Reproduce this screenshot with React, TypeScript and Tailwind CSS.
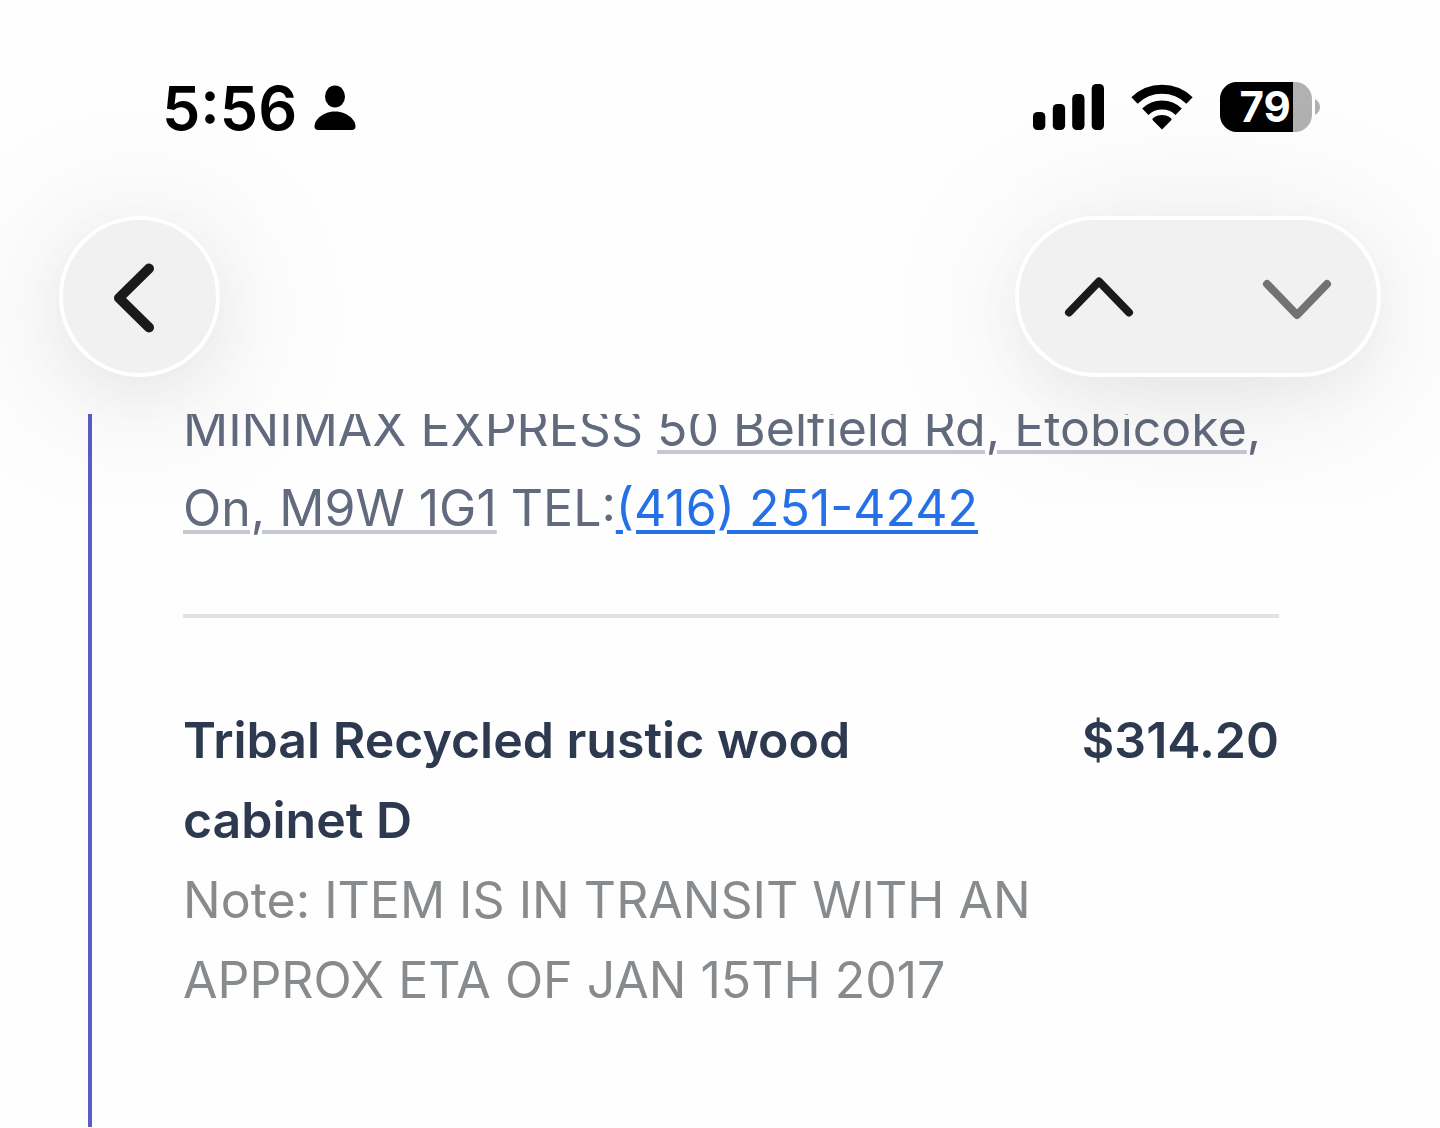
function PersonIcon() {
  return (
    <svg className="h-[46px] w-[42px]" viewBox="0 0 42 46" fill="#000" aria-hidden="true">
      <ellipse cx="21" cy="11.5" rx="10" ry="11" />
      <path d="M21 26.5c11 0 20.5 7.500 20.5 15 0 2.300-1.300 3.500-3.500 3.500H4C1.800 45 .5 43.800.5 41.500c0-7.500 9.500-15 20.500-15Z" />
    </svg>
  );
}

function SignalIcon() {
  return (
    <svg className="h-[46px] w-[72px]" viewBox="0 0 72 46" fill="#000" role="img" aria-label="Cellular signal">
      <rect x="1" y="28" width="12.3" height="18" rx="4.500" />
      <rect x="20.800" y="20" width="12.3" height="26" rx="4.500" />
      <rect x="40.200" y="10" width="12.3" height="36" rx="4.500" />
      <rect x="59.700" y="0" width="12.3" height="46" rx="4.500" />
    </svg>
  );
}

function WifiIcon() {
  return (
    <svg className="h-[46px] w-[62px]" viewBox="0 0 62 46" role="img" aria-label="Wi-Fi">
      <g fill="none" stroke="#000" strokeWidth="9">
        <path d="M3.500 16.500a39.500 39.500 0 0 1 55 0" />
        <path d="M14.300 27.800a24 24 0 0 1 33.400 0" />
      </g>
      <path d="M31 45.500 22 36.500c-.8-.8-.8-1.600 0-2.200 5.200-4.300 12.800-4.300 18 0 .8.600.8 1.400 0 2.200Z" fill="#000" />
    </svg>
  );
}

function Battery() {
  return (
    <div className="flex items-center gap-[3px]" role="img" aria-label="Battery 79%">
      <div className="flex h-[50px] w-[92px] overflow-hidden rounded-[17px] bg-[#b1b1b1]">
        <div className="flex h-full w-[79%] items-center justify-end bg-black pr-[2px] text-[42px] leading-none font-bold text-white">
          79
        </div>
      </div>
      <svg className="h-[16px] w-[5px]" viewBox="0 0 5 16" fill="#b1b1b1" aria-hidden="true">
        <path d="M0 0c3 1.500 5 4.500 5 8s-2 6.500-5 8Z" />
      </svg>
    </div>
  );
}

function StatusBar() {
  return (
    <div className="flex h-[216px] items-start justify-between pt-[78px] pr-[120px] pl-[162px]">
      <div className="flex items-center gap-[17px] leading-[60px]">
        <time className="text-[61px] font-semibold text-black">5:56</time>
        <PersonIcon />
      </div>
      <div className="flex h-[58px] items-center gap-[27px]">
        <SignalIcon />
        <WifiIcon />
        <Battery />
      </div>
    </div>
  );
}

function Toolbar() {
  return (
    <nav className="flex justify-between px-[59px]">
      <button
        type="button"
        aria-label="Back"
        className="flex size-[161px] items-center justify-center rounded-full border-4 border-white bg-[#f1f1f1] shadow-[0_16px_50px_rgba(0,0,0,0.04),0_16px_160px_rgba(0,0,0,0.13)]"
      >
        <svg className="size-[80px]" viewBox="0 0 80 80" fill="none" stroke="#1a1a1a" strokeWidth="10" strokeLinecap="round" strokeLinejoin="round">
          <path d="M49 11.500 19 41l30 29.500" />
        </svg>
      </button>
      <div className="flex h-[161px] w-[366px] justify-between rounded-full border-4 border-white bg-[#f1f1f1] px-11 shadow-[0_16px_50px_rgba(0,0,0,0.04),0_16px_160px_rgba(0,0,0,0.1)]">
        <button type="button" aria-label="Previous message" className="flex items-center">
          <svg className="size-[72px]" viewBox="0 0 72 72" fill="none" stroke="#1a1a1a" strokeWidth="8" strokeLinecap="round" strokeLinejoin="round">
            <path d="M6 51.500 36 20.500 66 51.500" />
          </svg>
        </button>
        <button type="button" aria-label="Next message" className="flex items-center">
          <svg className="size-[72px]" viewBox="0 0 72 72" fill="none" stroke="#727274" strokeWidth="8" strokeLinecap="round" strokeLinejoin="round">
            <path d="M6 23 36 54l30-31" />
          </svg>
        </button>
      </div>
    </nav>
  );
}

export default function App() {
  return (
    <div className="min-h-screen overflow-x-hidden bg-[#fefefe] font-['Inter',sans-serif]">
      <header className="relative z-10 h-[414px]">
        <StatusBar />
        <Toolbar />
      </header>
      <main className="ml-[88px] h-[713px] overflow-hidden border-l-4 border-[#5c5cc9] pr-[161px] pl-[91px] text-[50px] leading-[80px]">
        <address className="-mt-[26px] whitespace-nowrap text-[#616b7d] not-italic">
          MINIMAX EXPRESS{" "}
          <a href="#map" className="underline decoration-[#c5c8d1] decoration-4 underline-offset-[4px]">
            50 Belfield Rd, Etobicoke
          </a>
          ,<br />
          <a href="#map" className="underline decoration-[#c5c8d1] decoration-4 underline-offset-[4px]">
            On, M9W 1G1
          </a>{" "}
          TEL:
          <a href="tel:+14162514242" className="text-[#2470e6] underline decoration-4 underline-offset-[4px]">
            (416) 251-4242
          </a>
        </address>
        <hr className="mt-[66px] border-t-4 border-[#e1e1e1]" />
        <section className="mt-[82px] flex items-start justify-between">
          <div>
            <h2 className="font-semibold text-[#2d394e]">
              Tribal Recycled rustic wood
              <br />
              cabinet D
            </h2>
            <p className="text-[#888b8d]">
              Note: ITEM IS IN TRANSIT WITH AN
              <br />
              APPROX ETA OF JAN 15TH 2017
            </p>
          </div>
          <p className="font-semibold text-[#2d394e]">$314.20</p>
        </section>
      </main>
    </div>
  );
}
